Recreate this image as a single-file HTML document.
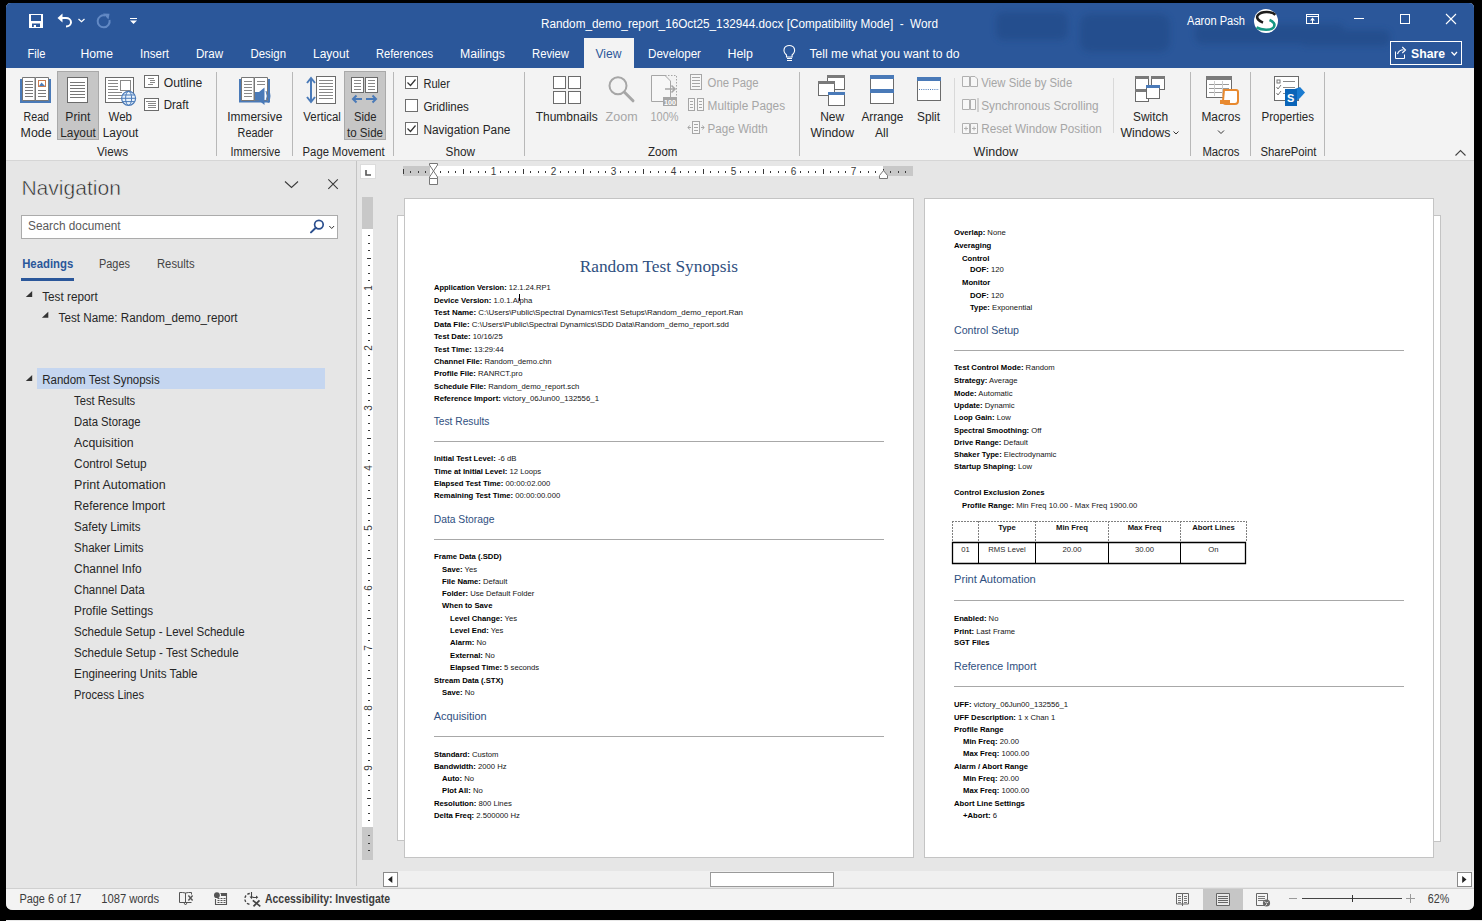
<!DOCTYPE html>
<html><head><meta charset="utf-8"><style>
html,body{margin:0;padding:0;background:#000;width:1482px;height:921px;overflow:hidden}
svg{display:block}
text{white-space:pre}
</style></head><body>
<svg width="1482" height="921" viewBox="0 0 1482 921">
<rect x="0" y="0" width="1482" height="921" fill="#000" />
<path d="M6,8 Q6,3 11,3 H1469 Q1474,3 1474,8 V903 Q1474,910 1467,910 H13 Q6,910 6,903 Z" fill="#e6e6e6"/>
<path d="M6,8 Q6,3 11,3 H1469 Q1474,3 1474,8 V68 H6 Z" fill="#2b579a"/>
<defs><filter id="bl" x="-20%" y="-50%" width="140%" height="200%"><feGaussianBlur stdDeviation="3"/></filter></defs>
<g fill="#1f4580" opacity="0.45" filter="url(#bl)"><rect x="996" y="12" width="72" height="28" rx="8"/><rect x="1080" y="14" width="90" height="38" rx="10"/><rect x="1195" y="24" width="150" height="20" rx="8"/><rect x="1300" y="30" width="90" height="16" rx="6"/></g>
<rect x="6" y="68" width="1468" height="92" fill="#f3f3f3" />
<rect x="6" y="160" width="1468" height="1" fill="#d6d6d6" />
<rect x="6" y="888" width="1468" height="1" fill="#d0d0d0" />
<path d="M6,889 H1474 V903 Q1474,910 1467,910 H13 Q6,910 6,903 Z" fill="#f3f3f3"/>
<rect x="6" y="920" width="1482" height="1" fill="#e8e8e8" />
<path d="M29,14 H43 V28 H29 Z M31,15 V21 H41 V15 Z M32,23.5 V27 H33.8 V25 H36 V27 H40 V23.5 Z" fill="#fff" fill-rule="evenodd"/>
<path d="M62,18 H66 A5,4.2 0 0 1 66,26.4" fill="none" stroke="#fff" stroke-width="2"/>
<path d="M57.5,18 L62.5,13.5 L62.5,22.5 Z" fill="#fff"/>
<path d="M78.5,19 L81.5,21.8 L84.5,19" fill="none" stroke="#fff" stroke-width="1.2"/>
<path d="M105,15.5 A6,6 0 1 0 109.5,20" fill="none" stroke="#6289c4" stroke-width="2"/>
<path d="M103,13.5 L109.5,13.8 L108.5,19.5 Z" fill="#6289c4"/>
<rect x="130" y="18" width="7" height="1" fill="#fff" />
<path d="M130,20.5 H137 L133.5,24 Z" fill="#fff"/>
<text x="541" y="27.5" font-size="12" fill="#ffffff" font-family="'Liberation Sans', sans-serif" textLength="397" lengthAdjust="spacingAndGlyphs" >Random_demo_report_16Oct25_132944.docx [Compatibility Mode]  -  Word</text>
<text x="1187" y="25" font-size="12" fill="#ffffff" font-family="'Liberation Sans', sans-serif" textLength="58" lengthAdjust="spacingAndGlyphs" >Aaron Pash</text>
<circle cx="1266" cy="21" r="12" fill="#fff"/>
<path d="M1275.3,14.8 C1272,11.5 1262,10.5 1258,15 C1255.5,18 1259,21 1263,22.6" fill="none" stroke="#1d1d1d" stroke-width="2.6"/>
<path d="M1269.5,20 C1273,21.5 1276,24 1273.5,27.5 C1271,30.5 1262,30.5 1256.5,27.5" fill="none" stroke="#169683" stroke-width="2.6"/>
<rect x="1306.5" y="14.5" width="12" height="9" fill="none" stroke="#fff" stroke-width="1"/>
<rect x="1306" y="16" width="13" height="1" fill="#fff" />
<path d="M1312.5,17.5 L1310,20.5 H1315 Z" fill="#fff"/>
<rect x="1312" y="20" width="1" height="3" fill="#fff" />
<rect x="1354" y="18" width="10" height="1" fill="#fff" />
<rect x="1400.5" y="14.5" width="9" height="9" fill="none" stroke="#fff" stroke-width="1"/>
<path d="M1446,14 L1456,24 M1456,14 L1446,24" stroke="#fff" stroke-width="1.1"/>
<rect x="1390.5" y="41.5" width="71" height="23" fill="none" stroke="#fff" stroke-width="1"/>
<path d="M1395.5,51.5 V58.5 H1404.5 V54.5" fill="none" stroke="#fff" stroke-width="1"/>
<path d="M1397.5,54 C1398.5,51 1400.5,49.8 1403.5,49.8" fill="none" stroke="#fff" stroke-width="1.1"/>
<path d="M1402.3,47 L1405.5,50 L1402.3,53" fill="none" stroke="#fff" stroke-width="1.1"/>
<text x="1411" y="58" font-size="12.5" fill="#ffffff" font-family="'Liberation Sans', sans-serif" font-weight="bold" textLength="34" lengthAdjust="spacingAndGlyphs" >Share</text>
<path d="M1451.5,52 L1454.3,55 L1457,52" fill="none" stroke="#fff" stroke-width="1.2"/>
<rect x="584" y="38" width="50" height="30" fill="#f3f3f3" />
<text x="27.5" y="57.5" font-size="12" fill="#ffffff" font-family="'Liberation Sans', sans-serif" textLength="18" lengthAdjust="spacingAndGlyphs" >File</text>
<text x="80.5" y="57.5" font-size="12" fill="#ffffff" font-family="'Liberation Sans', sans-serif" textLength="32.5" lengthAdjust="spacingAndGlyphs" >Home</text>
<text x="140" y="57.5" font-size="12" fill="#ffffff" font-family="'Liberation Sans', sans-serif" textLength="29" lengthAdjust="spacingAndGlyphs" >Insert</text>
<text x="196" y="57.5" font-size="12" fill="#ffffff" font-family="'Liberation Sans', sans-serif" textLength="27" lengthAdjust="spacingAndGlyphs" >Draw</text>
<text x="250.5" y="57.5" font-size="12" fill="#ffffff" font-family="'Liberation Sans', sans-serif" textLength="35.5" lengthAdjust="spacingAndGlyphs" >Design</text>
<text x="313" y="57.5" font-size="12" fill="#ffffff" font-family="'Liberation Sans', sans-serif" textLength="36" lengthAdjust="spacingAndGlyphs" >Layout</text>
<text x="376" y="57.5" font-size="12" fill="#ffffff" font-family="'Liberation Sans', sans-serif" textLength="57" lengthAdjust="spacingAndGlyphs" >References</text>
<text x="460" y="57.5" font-size="12" fill="#ffffff" font-family="'Liberation Sans', sans-serif" textLength="45" lengthAdjust="spacingAndGlyphs" >Mailings</text>
<text x="532" y="57.5" font-size="12" fill="#ffffff" font-family="'Liberation Sans', sans-serif" textLength="37" lengthAdjust="spacingAndGlyphs" >Review</text>
<text x="648" y="57.5" font-size="12" fill="#ffffff" font-family="'Liberation Sans', sans-serif" textLength="53" lengthAdjust="spacingAndGlyphs" >Developer</text>
<text x="727.5" y="57.5" font-size="12" fill="#ffffff" font-family="'Liberation Sans', sans-serif" textLength="25.5" lengthAdjust="spacingAndGlyphs" >Help</text>
<text x="595.5" y="57.5" font-size="12" fill="#2b579a" font-family="'Liberation Sans', sans-serif" textLength="26" lengthAdjust="spacingAndGlyphs" >View</text>
<path d="M786.5,55 C782,51 784,45.5 789.3,45.5 C794.6,45.5 796.6,51 792.1,55 V57 H786.5 Z" fill="none" stroke="#fff" stroke-width="1.1"/>
<rect x="787" y="58" width="5" height="1" fill="#fff" />
<rect x="787" y="60" width="5" height="1" fill="#fff" />
<text x="809.5" y="57.5" font-size="12" fill="#ffffff" font-family="'Liberation Sans', sans-serif" textLength="150" lengthAdjust="spacingAndGlyphs" >Tell me what you want to do</text>
<rect x="216" y="72" width="1" height="84" fill="#b8b8b8" />
<rect x="292" y="72" width="1" height="84" fill="#b8b8b8" />
<rect x="393" y="72" width="1" height="84" fill="#b8b8b8" />
<rect x="524" y="72" width="1" height="84" fill="#b8b8b8" />
<rect x="799" y="72" width="1" height="84" fill="#b8b8b8" />
<rect x="1190" y="72" width="1" height="84" fill="#b8b8b8" />
<rect x="1250" y="72" width="1" height="84" fill="#b8b8b8" />
<rect x="1324" y="72" width="1" height="84" fill="#b8b8b8" />
<rect x="954" y="78" width="1" height="55" fill="#d9d9d9" />
<rect x="1113" y="78" width="1" height="55" fill="#d9d9d9" />
<text x="97" y="155.5" font-size="12" fill="#262626" font-family="'Liberation Sans', sans-serif" textLength="31" lengthAdjust="spacingAndGlyphs" >Views</text>
<text x="230.5" y="155.5" font-size="12" fill="#262626" font-family="'Liberation Sans', sans-serif" textLength="49.7" lengthAdjust="spacingAndGlyphs" >Immersive</text>
<text x="302.6" y="155.5" font-size="12" fill="#262626" font-family="'Liberation Sans', sans-serif" textLength="82.1" lengthAdjust="spacingAndGlyphs" >Page Movement</text>
<text x="445.6" y="155.5" font-size="12" fill="#262626" font-family="'Liberation Sans', sans-serif" textLength="29.4" lengthAdjust="spacingAndGlyphs" >Show</text>
<text x="648" y="155.5" font-size="12" fill="#262626" font-family="'Liberation Sans', sans-serif" textLength="29.4" lengthAdjust="spacingAndGlyphs" >Zoom</text>
<text x="973.6" y="155.5" font-size="12" fill="#262626" font-family="'Liberation Sans', sans-serif" textLength="44.5" lengthAdjust="spacingAndGlyphs" >Window</text>
<text x="1202.4" y="155.5" font-size="12" fill="#262626" font-family="'Liberation Sans', sans-serif" textLength="37.1" lengthAdjust="spacingAndGlyphs" >Macros</text>
<text x="1260.5" y="155.5" font-size="12" fill="#262626" font-family="'Liberation Sans', sans-serif" textLength="56.0" lengthAdjust="spacingAndGlyphs" >SharePoint</text>
<rect x="57.5" y="71.5" width="41" height="68" fill="#c6c6c6" stroke="#a9a9a9" stroke-width="1"/>
<rect x="344.5" y="71.5" width="41" height="68" fill="#c6c6c6" stroke="#a9a9a9" stroke-width="1"/>
<rect x="20" y="79" width="31" height="24" fill="#4a7ab8" />
<path d="M22.5,77.5 H35 V100.5 H22.5 Z M35.5,77.5 H48.5 V100.5 H35.5 Z" fill="#fff" stroke="#777" stroke-width="1"/>
<rect x="25" y="81" width="8" height="1" fill="#7a7a7a" />
<rect x="25" y="84" width="8" height="1" fill="#7a7a7a" />
<rect x="25" y="87" width="8" height="1" fill="#7a7a7a" />
<rect x="25" y="90" width="8" height="1" fill="#7a7a7a" />
<rect x="25" y="93" width="8" height="1" fill="#7a7a7a" />
<rect x="25" y="96" width="8" height="1" fill="#7a7a7a" />
<rect x="38.5" y="80.5" width="7" height="6" fill="#fff" stroke="#c87b50" stroke-width="1"/>
<path d="M39,86 L41.5,82.5 L44,85 L45,86 Z" fill="#4a7ab8"/>
<rect x="38" y="90" width="8" height="1" fill="#7a7a7a" />
<rect x="38" y="93" width="8" height="1" fill="#7a7a7a" />
<rect x="38" y="96" width="8" height="1" fill="#7a7a7a" />
<text x="23.5" y="120.5" font-size="12" fill="#262626" font-family="'Liberation Sans', sans-serif" textLength="25.5" lengthAdjust="spacingAndGlyphs" >Read</text>
<text x="20.6" y="136.5" font-size="12" fill="#262626" font-family="'Liberation Sans', sans-serif" textLength="31" lengthAdjust="spacingAndGlyphs" >Mode</text>
<rect x="67.5" y="77.5" width="20" height="25" fill="#fff" stroke="#6b6b6b" stroke-width="1"/>
<rect x="70" y="82" width="15" height="1" fill="#777" />
<rect x="70" y="85" width="15" height="1" fill="#777" />
<rect x="70" y="88" width="15" height="1" fill="#777" />
<rect x="70" y="91" width="15" height="1" fill="#777" />
<rect x="70" y="94" width="15" height="1" fill="#777" />
<rect x="70" y="97" width="15" height="1" fill="#777" />
<text x="65.3" y="120.5" font-size="12" fill="#262626" font-family="'Liberation Sans', sans-serif" textLength="25" lengthAdjust="spacingAndGlyphs" >Print</text>
<text x="60.3" y="136.5" font-size="12" fill="#262626" font-family="'Liberation Sans', sans-serif" textLength="35.5" lengthAdjust="spacingAndGlyphs" >Layout</text>
<rect x="105.5" y="77.5" width="28" height="25" fill="#fff" stroke="#6b6b6b" stroke-width="1"/>
<rect x="108" y="80" width="10" height="1" fill="#888" />
<rect x="108" y="83" width="10" height="1" fill="#888" />
<rect x="108" y="86" width="10" height="1" fill="#888" />
<rect x="108" y="89" width="10" height="1" fill="#888" />
<rect x="108" y="92" width="14" height="1" fill="#888" />
<rect x="108" y="95" width="14" height="1" fill="#888" />
<rect x="108" y="98" width="14" height="1" fill="#888" />
<rect x="120.5" y="80.5" width="10" height="10" fill="#fff" stroke="#888" stroke-width="1"/>
<circle cx="128.6" cy="98.3" r="7" fill="#e8f2fb" stroke="#4a7ab8" stroke-width="1.2"/>
<ellipse cx="128.6" cy="98.3" rx="3" ry="7" fill="none" stroke="#4a7ab8" stroke-width="1"/>
<path d="M121.6,98.3 H135.6 M122.5,95 H134.7 M122.5,101.6 H134.7" stroke="#4a7ab8" stroke-width="1"/>
<text x="108.5" y="120.5" font-size="12" fill="#262626" font-family="'Liberation Sans', sans-serif" textLength="23.5" lengthAdjust="spacingAndGlyphs" >Web</text>
<text x="102.8" y="136.5" font-size="12" fill="#262626" font-family="'Liberation Sans', sans-serif" textLength="35.5" lengthAdjust="spacingAndGlyphs" >Layout</text>
<rect x="144.5" y="75.5" width="14" height="12" fill="#fff" stroke="#6b6b6b" stroke-width="1"/>
<rect x="148" y="78" width="6" height="1" fill="#888" />
<rect x="150" y="80" width="5" height="1" fill="#888" />
<rect x="150" y="82" width="5" height="1" fill="#888" />
<rect x="148" y="84" width="5" height="1" fill="#888" />
<text x="163.7" y="87" font-size="12" fill="#262626" font-family="'Liberation Sans', sans-serif" textLength="38.5" lengthAdjust="spacingAndGlyphs" >Outline</text>
<rect x="144.5" y="98.5" width="14" height="12" fill="#fff" stroke="#6b6b6b" stroke-width="1"/>
<rect x="146" y="101" width="10" height="1" fill="#888" />
<rect x="148" y="103" width="8" height="1" fill="#888" />
<rect x="148" y="105" width="8" height="1" fill="#888" />
<rect x="148" y="107" width="8" height="1" fill="#888" />
<text x="163.7" y="109" font-size="12" fill="#262626" font-family="'Liberation Sans', sans-serif" textLength="25" lengthAdjust="spacingAndGlyphs" >Draft</text>
<rect x="239" y="79" width="31" height="23.5" fill="#4a7ab8" />
<path d="M241.5,77.5 H254 V100.5 H241.5 Z M254.5,77.5 H267.5 V100.5 H254.5 Z" fill="#fff" stroke="#777" stroke-width="1"/>
<rect x="244" y="81" width="8" height="1" fill="#8a8a8a" />
<rect x="244" y="84" width="8" height="1" fill="#8a8a8a" />
<rect x="244" y="87" width="8" height="1" fill="#8a8a8a" />
<rect x="244" y="90" width="8" height="1" fill="#8a8a8a" />
<rect x="244" y="93" width="8" height="1" fill="#8a8a8a" />
<rect x="244" y="96" width="8" height="1" fill="#8a8a8a" />
<rect x="257" y="81" width="8" height="1" fill="#8a8a8a" />
<rect x="257" y="84" width="8" height="1" fill="#8a8a8a" />
<path d="M255,92 H259 L264.5,87.5 V105 L259,100.5 H255 Z" fill="#4a7ab8"/>
<path d="M266,91 Q268.5,96 266,101 M268,89 Q272,96 268,103" fill="none" stroke="#4a7ab8" stroke-width="1"/>
<text x="227.3" y="120.5" font-size="12" fill="#262626" font-family="'Liberation Sans', sans-serif" textLength="55" lengthAdjust="spacingAndGlyphs" >Immersive</text>
<text x="237.6" y="136.5" font-size="12" fill="#262626" font-family="'Liberation Sans', sans-serif" textLength="35.5" lengthAdjust="spacingAndGlyphs" >Reader</text>
<path d="M311,79 V101" stroke="#4a7ab8" stroke-width="2"/>
<path d="M307,83 L311,78 L315,83 M307,97 L311,102 L315,97" fill="none" stroke="#4a7ab8" stroke-width="2"/>
<rect x="316.5" y="76.5" width="19" height="27" fill="#fff" stroke="#6b6b6b" stroke-width="1"/>
<rect x="319" y="80" width="14" height="1" fill="#888" />
<rect x="319" y="83" width="14" height="1" fill="#888" />
<rect x="319" y="86" width="14" height="1" fill="#888" />
<rect x="319" y="89" width="14" height="1" fill="#888" />
<rect x="319" y="92" width="14" height="1" fill="#888" />
<rect x="319" y="95" width="14" height="1" fill="#888" />
<rect x="319" y="98" width="14" height="1" fill="#888" />
<text x="303.3" y="120.5" font-size="12" fill="#262626" font-family="'Liberation Sans', sans-serif" textLength="37.5" lengthAdjust="spacingAndGlyphs" >Vertical</text>
<rect x="351.5" y="77.5" width="12" height="15" fill="#fff" stroke="#6b6b6b" stroke-width="1"/>
<rect x="365.5" y="77.5" width="12" height="15" fill="#fff" stroke="#6b6b6b" stroke-width="1"/>
<rect x="354" y="80" width="7" height="1" fill="#888" />
<rect x="354" y="83" width="7" height="1" fill="#888" />
<rect x="354" y="86" width="7" height="1" fill="#888" />
<rect x="354" y="89" width="7" height="1" fill="#888" />
<rect x="368" y="80" width="7" height="1" fill="#888" />
<rect x="368" y="83" width="7" height="1" fill="#888" />
<rect x="368" y="86" width="7" height="1" fill="#888" />
<rect x="368" y="89" width="7" height="1" fill="#888" />
<path d="M353,99 H362 M366,99 H376" stroke="#4a7ab8" stroke-width="2"/>
<path d="M356.5,95.5 L353,99 L356.5,102.5 M372.5,95.5 L376,99 L372.5,102.5" fill="none" stroke="#4a7ab8" stroke-width="2"/>
<text x="354" y="120.5" font-size="12" fill="#262626" font-family="'Liberation Sans', sans-serif" textLength="22.5" lengthAdjust="spacingAndGlyphs" >Side</text>
<text x="347" y="136.5" font-size="12" fill="#262626" font-family="'Liberation Sans', sans-serif" textLength="36" lengthAdjust="spacingAndGlyphs" >to Side</text>
<rect x="405.5" y="76.5" width="12" height="12" fill="#fff" stroke="#6e6e6e" stroke-width="1"/>
<path d="M407.5,82.5 L410.5,85.5 L415.5,79.5" fill="none" stroke="#333" stroke-width="1.2"/>
<text x="423.4" y="88" font-size="12" fill="#262626" font-family="'Liberation Sans', sans-serif" textLength="26.5" lengthAdjust="spacingAndGlyphs" >Ruler</text>
<rect x="405.5" y="99.5" width="12" height="12" fill="#fff" stroke="#6e6e6e" stroke-width="1"/>
<text x="423.4" y="111" font-size="12" fill="#262626" font-family="'Liberation Sans', sans-serif" textLength="45.5" lengthAdjust="spacingAndGlyphs" >Gridlines</text>
<rect x="405.5" y="122.5" width="12" height="12" fill="#fff" stroke="#6e6e6e" stroke-width="1"/>
<path d="M407.5,128.5 L410.5,131.5 L415.5,125.5" fill="none" stroke="#333" stroke-width="1.2"/>
<text x="423.4" y="134" font-size="12" fill="#262626" font-family="'Liberation Sans', sans-serif" textLength="87" lengthAdjust="spacingAndGlyphs" >Navigation Pane</text>
<rect x="553.5" y="76.5" width="12" height="12" fill="#fff" stroke="#6b6b6b" stroke-width="1"/>
<rect x="568.5" y="76.5" width="12" height="12" fill="#fff" stroke="#6b6b6b" stroke-width="1"/>
<rect x="553.5" y="91.5" width="12" height="12" fill="#fff" stroke="#6b6b6b" stroke-width="1"/>
<rect x="568.5" y="91.5" width="12" height="12" fill="#fff" stroke="#6b6b6b" stroke-width="1"/>
<text x="535.7" y="120.8" font-size="12" fill="#262626" font-family="'Liberation Sans', sans-serif" textLength="62" lengthAdjust="spacingAndGlyphs" >Thumbnails</text>
<circle cx="618" cy="85.8" r="8.5" fill="none" stroke="#a6a6a6" stroke-width="2"/>
<path d="M624.5,92.3 L633,100.8" stroke="#a6a6a6" stroke-width="3" stroke-linecap="round"/>
<text x="605.6" y="120.8" font-size="12" fill="#a6a6a6" font-family="'Liberation Sans', sans-serif" textLength="32" lengthAdjust="spacingAndGlyphs" >Zoom</text>
<path d="M651.5,75.5 H665 L670.5,81 V101.5 H651.5 Z" fill="#f7f7f7" stroke="#a6a6a6" stroke-width="1"/>
<path d="M665,75.5 H676.5 V96" fill="none" stroke="#a6a6a6" stroke-width="1" stroke-dasharray="1.5,1.5"/>
<path d="M665,89 H675 M671.5,85.5 L675,89 L671.5,92.5" fill="none" stroke="#a6a6a6" stroke-width="1.6"/>
<rect x="663" y="97" width="14" height="9" fill="#a6a6a6" />
<text x="664" y="104.5" font-size="7" fill="#fff" font-family="'Liberation Sans', sans-serif" font-weight="bold" textLength="12" lengthAdjust="spacingAndGlyphs" >100</text>
<text x="650.5" y="120.8" font-size="12" fill="#a6a6a6" font-family="'Liberation Sans', sans-serif" textLength="28" lengthAdjust="spacingAndGlyphs" >100%</text>
<rect x="690.5" y="74.5" width="11" height="15" fill="#f7f7f7" stroke="#a6a6a6" stroke-width="1"/>
<rect x="692" y="77" width="8" height="1" fill="#a6a6a6" />
<rect x="692" y="80" width="8" height="1" fill="#a6a6a6" />
<rect x="692" y="83" width="8" height="1" fill="#a6a6a6" />
<rect x="692" y="86" width="8" height="1" fill="#a6a6a6" />
<text x="707.6" y="86.5" font-size="12" fill="#a6a6a6" font-family="'Liberation Sans', sans-serif" textLength="51" lengthAdjust="spacingAndGlyphs" >One Page</text>
<rect x="688.5" y="98.5" width="6" height="12" fill="#f7f7f7" stroke="#a6a6a6" stroke-width="1"/>
<rect x="697.5" y="98.5" width="6" height="12" fill="#f7f7f7" stroke="#a6a6a6" stroke-width="1"/>
<rect x="690" y="101" width="3" height="1" fill="#a6a6a6" />
<rect x="690" y="104" width="3" height="1" fill="#a6a6a6" />
<rect x="690" y="107" width="3" height="1" fill="#a6a6a6" />
<rect x="699" y="101" width="3" height="1" fill="#a6a6a6" />
<rect x="699" y="104" width="3" height="1" fill="#a6a6a6" />
<rect x="699" y="107" width="3" height="1" fill="#a6a6a6" />
<text x="707.6" y="109.5" font-size="12" fill="#a6a6a6" font-family="'Liberation Sans', sans-serif" textLength="77.5" lengthAdjust="spacingAndGlyphs" >Multiple Pages</text>
<rect x="692.5" y="121.5" width="7" height="12" fill="#f7f7f7" stroke="#a6a6a6" stroke-width="1"/>
<rect x="694" y="124" width="4" height="1" fill="#a6a6a6" />
<rect x="694" y="127" width="4" height="1" fill="#a6a6a6" />
<rect x="694" y="130" width="4" height="1" fill="#a6a6a6" />
<path d="M691,127.5 L688,127.5 M689.5,125.5 L688,127.5 L689.5,129.5 M701,127.5 H704 M702.5,125.5 L704,127.5 L702.5,129.5" fill="none" stroke="#a6a6a6" stroke-width="1"/>
<text x="707.6" y="132.5" font-size="12" fill="#a6a6a6" font-family="'Liberation Sans', sans-serif" textLength="60" lengthAdjust="spacingAndGlyphs" >Page Width</text>
<rect x="827.5" y="75.5" width="17" height="14" fill="#fff" stroke="#6b6b6b" stroke-width="1"/>
<rect x="827" y="75" width="18" height="3" fill="#7a7a7a" />
<rect x="818.5" y="81.5" width="16" height="14" fill="#fff" stroke="#6b6b6b" stroke-width="1"/>
<rect x="818" y="81" width="17" height="3" fill="#7a7a7a" />
<rect x="828.5" y="92.5" width="16" height="13" fill="#fff" stroke="#6b6b6b" stroke-width="1"/>
<rect x="828" y="92" width="17" height="3" fill="#4a7ab8" />
<text x="820.2" y="120.7" font-size="12" fill="#262626" font-family="'Liberation Sans', sans-serif" textLength="24" lengthAdjust="spacingAndGlyphs" >New</text>
<text x="810.5" y="136.5" font-size="12" fill="#262626" font-family="'Liberation Sans', sans-serif" textLength="43.5" lengthAdjust="spacingAndGlyphs" >Window</text>
<rect x="870.5" y="75.5" width="23" height="28" fill="#fff" stroke="#6b6b6b" stroke-width="1"/>
<rect x="870" y="75" width="24" height="4" fill="#4a7ab8" />
<rect x="870" y="89" width="24" height="4" fill="#4a7ab8" />
<text x="861.4" y="120.7" font-size="12" fill="#262626" font-family="'Liberation Sans', sans-serif" textLength="42" lengthAdjust="spacingAndGlyphs" >Arrange</text>
<text x="874.9" y="136.5" font-size="12" fill="#262626" font-family="'Liberation Sans', sans-serif" textLength="13.5" lengthAdjust="spacingAndGlyphs" >All</text>
<rect x="917.5" y="77.5" width="23" height="23" fill="#fff" stroke="#6b6b6b" stroke-width="1"/>
<rect x="917" y="77" width="24" height="4" fill="#4a7ab8" />
<path d="M919,89.5 H939" stroke="#4a7ab8" stroke-width="1" stroke-dasharray="1,1.2"/>
<text x="917" y="120.7" font-size="12" fill="#262626" font-family="'Liberation Sans', sans-serif" textLength="23" lengthAdjust="spacingAndGlyphs" >Split</text>
<path d="M962.5,76.5 H969.5 V86.5 H962.5 Z M970.5,76.5 H975 L977.5,79 V86.5 H970.5 Z" fill="#f7f7f7" stroke="#b0b0b0" stroke-width="1"/>
<text x="981.2" y="86.6" font-size="12" fill="#a6a6a6" font-family="'Liberation Sans', sans-serif" textLength="91" lengthAdjust="spacingAndGlyphs" >View Side by Side</text>
<path d="M962.5,99.5 H969.5 V109.5 H962.5 Z M970.5,99.5 H975.5 V109.5 H970.5 Z M978,98 V112" fill="#f7f7f7" stroke="#b0b0b0" stroke-width="1"/>
<text x="981.2" y="109.5" font-size="12" fill="#a6a6a6" font-family="'Liberation Sans', sans-serif" textLength="117.5" lengthAdjust="spacingAndGlyphs" >Synchronous Scrolling</text>
<path d="M962.5,123.5 H969.5 V133.5 H962.5 Z M970.5,123.5 H977.5 V133.5 H970.5 Z M964,128.5 H968 M966,126.5 V130.5 M972,128.5 H976 M974,126.5 V130.5" fill="#f7f7f7" stroke="#b0b0b0" stroke-width="1"/>
<text x="981.2" y="132.6" font-size="12" fill="#a6a6a6" font-family="'Liberation Sans', sans-serif" textLength="120.5" lengthAdjust="spacingAndGlyphs" >Reset Window Position</text>
<rect x="1135.5" y="76.5" width="13" height="13" fill="#fff" stroke="#6b6b6b" stroke-width="1"/>
<rect x="1135" y="76" width="14" height="3" fill="#7a7a7a" />
<rect x="1151.5" y="76.5" width="13" height="13" fill="#fff" stroke="#6b6b6b" stroke-width="1"/>
<rect x="1151" y="76" width="14" height="3" fill="#7a7a7a" />
<rect x="1135.5" y="89.5" width="13" height="12" fill="#fff" stroke="#6b6b6b" stroke-width="1"/>
<rect x="1135" y="89" width="14" height="3" fill="#7a7a7a" />
<rect x="1146.5" y="85.5" width="13" height="13" fill="#fff" stroke="#6b6b6b" stroke-width="1"/>
<rect x="1146" y="85" width="14" height="3" fill="#4a7ab8" />
<text x="1133" y="120.5" font-size="12" fill="#262626" font-family="'Liberation Sans', sans-serif" textLength="35" lengthAdjust="spacingAndGlyphs" >Switch</text>
<text x="1120.4" y="136.5" font-size="12" fill="#262626" font-family="'Liberation Sans', sans-serif" textLength="50" lengthAdjust="spacingAndGlyphs" >Windows</text>
<path d="M1173.5,131.5 L1176,134 L1178.5,131.5" fill="none" stroke="#333" stroke-width="1"/>
<rect x="1206.5" y="76.5" width="25" height="21" fill="#fff" stroke="#6b6b6b" stroke-width="1"/>
<rect x="1206" y="76" width="26" height="4" fill="#7a7a7a" />
<rect x="1209" y="84" width="20" height="1" fill="#999" />
<rect x="1209" y="88" width="20" height="1" fill="#999" />
<rect x="1209" y="92" width="20" height="1" fill="#999" />
<rect x="1214" y="81" width="1" height="15" fill="#ccc" />
<rect x="1222" y="81" width="1" height="15" fill="#ccc" />
<path d="M1224,90 H1236 Q1238,90 1238,92 V101 Q1238,104 1235,104 H1226 Q1223,104 1223,101 Z" fill="#fff" stroke="#e8892f" stroke-width="2"/>
<rect x="1220" y="100" width="10" height="4" fill="#e8892f" />
<text x="1201.4" y="120.7" font-size="12" fill="#262626" font-family="'Liberation Sans', sans-serif" textLength="39" lengthAdjust="spacingAndGlyphs" >Macros</text>
<path d="M1218,130.5 L1221,133.5 L1224,130.5" fill="none" stroke="#333" stroke-width="1"/>
<rect x="1274.5" y="76.5" width="24" height="24" fill="#fff" stroke="#6b6b6b" stroke-width="1"/>
<rect x="1277" y="80" width="3" height="3" fill="#fff" stroke="#777" stroke-width="1"/>
<rect x="1283" y="81" width="12" height="1" fill="#888" />
<rect x="1283" y="87" width="12" height="1" fill="#888" />
<rect x="1283" y="93" width="7" height="1" fill="#888" />
<path d="M1276.5,87 L1278,89 L1281,85 M1276.5,93 L1278,95 L1281,91" fill="none" stroke="#777" stroke-width="1"/>
<path d="M1292,90 L1300,87 L1305,92.5 L1300,98 L1292,105 Z" fill="#1a7bd0"/>
<path d="M1285,89 H1297 V106 H1285 Z" fill="#0a64b8"/>
<text x="1287" y="102" font-size="11" fill="#fff" font-family="'Liberation Sans', sans-serif" font-weight="bold" >S</text>
<text x="1261.5" y="120.7" font-size="12" fill="#262626" font-family="'Liberation Sans', sans-serif" textLength="52.5" lengthAdjust="spacingAndGlyphs" >Properties</text>
<path d="M1455.5,155.5 L1460.5,150.5 L1465.5,155.5" fill="none" stroke="#444" stroke-width="1.1"/>
<rect x="356" y="161" width="1" height="725" fill="#c4c4c4" />
<text x="21.4" y="195.2" font-size="21" fill="#222" font-family="'Liberation Sans', sans-serif" textLength="99.5" lengthAdjust="spacingAndGlyphs" stroke="#e6e6e6" stroke-width="0.55">Navigation</text>
<path d="M285,181.5 L291.5,187.5 L298,181.5" fill="none" stroke="#3a3a3a" stroke-width="1.1"/>
<path d="M328.3,179.3 L337.8,188.8 M337.8,179.3 L328.3,188.8" stroke="#3a3a3a" stroke-width="1.1"/>
<rect x="21.5" y="215.5" width="316" height="23" fill="#fff" stroke="#ababab" stroke-width="1"/>
<text x="28.1" y="230.4" font-size="12" fill="#5a5a5a" font-family="'Liberation Sans', sans-serif" textLength="92.5" lengthAdjust="spacingAndGlyphs" >Search document</text>
<circle cx="318.9" cy="224.6" r="4.3" fill="none" stroke="#2b4f8e" stroke-width="1.7"/>
<path d="M315.8,227.8 L311,232.4" stroke="#2b4f8e" stroke-width="2" stroke-linecap="round"/>
<path d="M329.3,226 L331.7,228.5 L334.1,226" fill="none" stroke="#333" stroke-width="1"/>
<text x="22.2" y="268.2" font-size="12" fill="#2b579a" font-family="'Liberation Sans', sans-serif" font-weight="bold" textLength="51" lengthAdjust="spacingAndGlyphs" >Headings</text>
<rect x="21" y="278" width="53" height="3" fill="#2b579a" />
<text x="99" y="268.2" font-size="12" fill="#444" font-family="'Liberation Sans', sans-serif" textLength="31" lengthAdjust="spacingAndGlyphs" >Pages</text>
<text x="157" y="268.2" font-size="12" fill="#444" font-family="'Liberation Sans', sans-serif" textLength="37.5" lengthAdjust="spacingAndGlyphs" >Results</text>
<path d="M25.8,297 L32.2,291 V297 Z" fill="#333"/>
<text x="42.2" y="300.7" font-size="12" fill="#262626" font-family="'Liberation Sans', sans-serif" textLength="55.5" lengthAdjust="spacingAndGlyphs" >Test report</text>
<path d="M41.9,317.7 L48.3,311.7 V317.7 Z" fill="#333"/>
<text x="58.6" y="321.6" font-size="12" fill="#262626" font-family="'Liberation Sans', sans-serif" textLength="179" lengthAdjust="spacingAndGlyphs" >Test Name: Random_demo_report</text>
<rect x="37" y="368" width="288" height="21" fill="#c5d6f0" />
<path d="M25.8,381 L32.2,375 V381 Z" fill="#333"/>
<text x="42.2" y="384.1" font-size="12" fill="#262626" font-family="'Liberation Sans', sans-serif" textLength="117.5" lengthAdjust="spacingAndGlyphs" >Random Test Synopsis</text>
<text x="74.1" y="405" font-size="12" fill="#262626" font-family="'Liberation Sans', sans-serif" textLength="61" lengthAdjust="spacingAndGlyphs" >Test Results</text>
<text x="74.1" y="426" font-size="12" fill="#262626" font-family="'Liberation Sans', sans-serif" textLength="66.5" lengthAdjust="spacingAndGlyphs" >Data Storage</text>
<text x="74.1" y="447" font-size="12" fill="#262626" font-family="'Liberation Sans', sans-serif" textLength="59.5" lengthAdjust="spacingAndGlyphs" >Acquisition</text>
<text x="74.1" y="468" font-size="12" fill="#262626" font-family="'Liberation Sans', sans-serif" textLength="72.5" lengthAdjust="spacingAndGlyphs" >Control Setup</text>
<text x="74.1" y="489" font-size="12" fill="#262626" font-family="'Liberation Sans', sans-serif" textLength="91.5" lengthAdjust="spacingAndGlyphs" >Print Automation</text>
<text x="74.1" y="510" font-size="12" fill="#262626" font-family="'Liberation Sans', sans-serif" textLength="91" lengthAdjust="spacingAndGlyphs" >Reference Import</text>
<text x="74.1" y="531" font-size="12" fill="#262626" font-family="'Liberation Sans', sans-serif" textLength="66.5" lengthAdjust="spacingAndGlyphs" >Safety Limits</text>
<text x="74.1" y="552" font-size="12" fill="#262626" font-family="'Liberation Sans', sans-serif" textLength="69.5" lengthAdjust="spacingAndGlyphs" >Shaker Limits</text>
<text x="74.1" y="573" font-size="12" fill="#262626" font-family="'Liberation Sans', sans-serif" textLength="67.5" lengthAdjust="spacingAndGlyphs" >Channel Info</text>
<text x="74.1" y="594" font-size="12" fill="#262626" font-family="'Liberation Sans', sans-serif" textLength="70.5" lengthAdjust="spacingAndGlyphs" >Channel Data</text>
<text x="74.1" y="615" font-size="12" fill="#262626" font-family="'Liberation Sans', sans-serif" textLength="79" lengthAdjust="spacingAndGlyphs" >Profile Settings</text>
<text x="74.1" y="636" font-size="12" fill="#262626" font-family="'Liberation Sans', sans-serif" textLength="170.5" lengthAdjust="spacingAndGlyphs" >Schedule Setup - Level Schedule</text>
<text x="74.1" y="657" font-size="12" fill="#262626" font-family="'Liberation Sans', sans-serif" textLength="164.5" lengthAdjust="spacingAndGlyphs" >Schedule Setup - Test Schedule</text>
<text x="74.1" y="678" font-size="12" fill="#262626" font-family="'Liberation Sans', sans-serif" textLength="123.5" lengthAdjust="spacingAndGlyphs" >Engineering Units Table</text>
<text x="74.1" y="699" font-size="12" fill="#262626" font-family="'Liberation Sans', sans-serif" textLength="70" lengthAdjust="spacingAndGlyphs" >Process Lines</text>
<rect x="360" y="164" width="16" height="15" fill="#dcdcdc" />
<rect x="361" y="165" width="14" height="13" fill="#fff" />
<path d="M366,170 V175 H371" fill="none" stroke="#555" stroke-width="1.6"/>
<rect x="403" y="166" width="510" height="10" fill="#c8c8c8" />
<rect x="430" y="166" width="453" height="10" fill="#fff" />
<rect x="403" y="169" width="1" height="5" fill="#3a3a3a" />
<rect x="410" y="171" width="1" height="2" fill="#3a3a3a" />
<rect x="418" y="171" width="1" height="2" fill="#3a3a3a" />
<rect x="425" y="171" width="1" height="2" fill="#3a3a3a" />
<rect x="440" y="171" width="1" height="2" fill="#3a3a3a" />
<rect x="448" y="171" width="1" height="2" fill="#3a3a3a" />
<rect x="455" y="171" width="1" height="2" fill="#3a3a3a" />
<rect x="463" y="169" width="1" height="5" fill="#3a3a3a" />
<rect x="470" y="171" width="1" height="2" fill="#3a3a3a" />
<rect x="478" y="171" width="1" height="2" fill="#3a3a3a" />
<rect x="485" y="171" width="1" height="2" fill="#3a3a3a" />
<text x="493.5" y="175" font-size="10" fill="#3a3a3a" font-family="'Liberation Sans', sans-serif" text-anchor="middle" >1</text>
<rect x="500" y="171" width="1" height="2" fill="#3a3a3a" />
<rect x="508" y="171" width="1" height="2" fill="#3a3a3a" />
<rect x="515" y="171" width="1" height="2" fill="#3a3a3a" />
<rect x="523" y="169" width="1" height="5" fill="#3a3a3a" />
<rect x="530" y="171" width="1" height="2" fill="#3a3a3a" />
<rect x="538" y="171" width="1" height="2" fill="#3a3a3a" />
<rect x="545" y="171" width="1" height="2" fill="#3a3a3a" />
<text x="553.5" y="175" font-size="10" fill="#3a3a3a" font-family="'Liberation Sans', sans-serif" text-anchor="middle" >2</text>
<rect x="560" y="171" width="1" height="2" fill="#3a3a3a" />
<rect x="568" y="171" width="1" height="2" fill="#3a3a3a" />
<rect x="575" y="171" width="1" height="2" fill="#3a3a3a" />
<rect x="583" y="169" width="1" height="5" fill="#3a3a3a" />
<rect x="590" y="171" width="1" height="2" fill="#3a3a3a" />
<rect x="598" y="171" width="1" height="2" fill="#3a3a3a" />
<rect x="605" y="171" width="1" height="2" fill="#3a3a3a" />
<text x="613.5" y="175" font-size="10" fill="#3a3a3a" font-family="'Liberation Sans', sans-serif" text-anchor="middle" >3</text>
<rect x="620" y="171" width="1" height="2" fill="#3a3a3a" />
<rect x="628" y="171" width="1" height="2" fill="#3a3a3a" />
<rect x="635" y="171" width="1" height="2" fill="#3a3a3a" />
<rect x="643" y="169" width="1" height="5" fill="#3a3a3a" />
<rect x="650" y="171" width="1" height="2" fill="#3a3a3a" />
<rect x="658" y="171" width="1" height="2" fill="#3a3a3a" />
<rect x="665" y="171" width="1" height="2" fill="#3a3a3a" />
<text x="673.5" y="175" font-size="10" fill="#3a3a3a" font-family="'Liberation Sans', sans-serif" text-anchor="middle" >4</text>
<rect x="680" y="171" width="1" height="2" fill="#3a3a3a" />
<rect x="688" y="171" width="1" height="2" fill="#3a3a3a" />
<rect x="695" y="171" width="1" height="2" fill="#3a3a3a" />
<rect x="703" y="169" width="1" height="5" fill="#3a3a3a" />
<rect x="710" y="171" width="1" height="2" fill="#3a3a3a" />
<rect x="718" y="171" width="1" height="2" fill="#3a3a3a" />
<rect x="725" y="171" width="1" height="2" fill="#3a3a3a" />
<text x="733.5" y="175" font-size="10" fill="#3a3a3a" font-family="'Liberation Sans', sans-serif" text-anchor="middle" >5</text>
<rect x="740" y="171" width="1" height="2" fill="#3a3a3a" />
<rect x="748" y="171" width="1" height="2" fill="#3a3a3a" />
<rect x="755" y="171" width="1" height="2" fill="#3a3a3a" />
<rect x="763" y="169" width="1" height="5" fill="#3a3a3a" />
<rect x="770" y="171" width="1" height="2" fill="#3a3a3a" />
<rect x="778" y="171" width="1" height="2" fill="#3a3a3a" />
<rect x="785" y="171" width="1" height="2" fill="#3a3a3a" />
<text x="793.5" y="175" font-size="10" fill="#3a3a3a" font-family="'Liberation Sans', sans-serif" text-anchor="middle" >6</text>
<rect x="800" y="171" width="1" height="2" fill="#3a3a3a" />
<rect x="808" y="171" width="1" height="2" fill="#3a3a3a" />
<rect x="815" y="171" width="1" height="2" fill="#3a3a3a" />
<rect x="823" y="169" width="1" height="5" fill="#3a3a3a" />
<rect x="830" y="171" width="1" height="2" fill="#3a3a3a" />
<rect x="838" y="171" width="1" height="2" fill="#3a3a3a" />
<rect x="845" y="171" width="1" height="2" fill="#3a3a3a" />
<text x="853.5" y="175" font-size="10" fill="#3a3a3a" font-family="'Liberation Sans', sans-serif" text-anchor="middle" >7</text>
<rect x="860" y="171" width="1" height="2" fill="#3a3a3a" />
<rect x="868" y="171" width="1" height="2" fill="#3a3a3a" />
<rect x="875" y="171" width="1" height="2" fill="#3a3a3a" />
<rect x="883" y="169" width="1" height="5" fill="#3a3a3a" />
<rect x="890" y="171" width="1" height="2" fill="#3a3a3a" />
<rect x="898" y="171" width="1" height="2" fill="#3a3a3a" />
<rect x="905" y="171" width="1" height="2" fill="#3a3a3a" />
<path d="M429.5,163.5 H437.5 V165 L433.5,171 L429.5,165 Z" fill="#fff" stroke="#777" stroke-width="1"/>
<path d="M433.5,171 L437.5,177 V178.5 H429.5 V177 Z" fill="#fff" stroke="#777" stroke-width="1"/>
<path d="M429.5,178.5 H437.5 V184.5 H429.5 Z" fill="#fff" stroke="#777" stroke-width="1"/>
<path d="M883.5,170.5 L887.5,175.5 V178.5 H879.5 V175.5 Z" fill="#fff" stroke="#777" stroke-width="1"/>
<rect x="362" y="197" width="11" height="663" fill="#c8c8c8" />
<rect x="362" y="229" width="11" height="598" fill="#fff" />
<rect x="368" y="235" width="2" height="1" fill="#3a3a3a" />
<rect x="368" y="243" width="2" height="1" fill="#3a3a3a" />
<rect x="368" y="250" width="2" height="1" fill="#3a3a3a" />
<rect x="367" y="258" width="4" height="1" fill="#3a3a3a" />
<rect x="368" y="265" width="2" height="1" fill="#3a3a3a" />
<rect x="368" y="273" width="2" height="1" fill="#3a3a3a" />
<rect x="368" y="280" width="2" height="1" fill="#3a3a3a" />
<text x="0" y="0" font-size="10" fill="#3a3a3a" font-family="'Liberation Sans', sans-serif" text-anchor="middle" transform="translate(372.2,288.0) rotate(-90)">1</text>
<rect x="368" y="295" width="2" height="1" fill="#3a3a3a" />
<rect x="368" y="303" width="2" height="1" fill="#3a3a3a" />
<rect x="368" y="310" width="2" height="1" fill="#3a3a3a" />
<rect x="367" y="318" width="4" height="1" fill="#3a3a3a" />
<rect x="368" y="325" width="2" height="1" fill="#3a3a3a" />
<rect x="368" y="333" width="2" height="1" fill="#3a3a3a" />
<rect x="368" y="340" width="2" height="1" fill="#3a3a3a" />
<text x="0" y="0" font-size="10" fill="#3a3a3a" font-family="'Liberation Sans', sans-serif" text-anchor="middle" transform="translate(372.2,348.0) rotate(-90)">2</text>
<rect x="368" y="355" width="2" height="1" fill="#3a3a3a" />
<rect x="368" y="363" width="2" height="1" fill="#3a3a3a" />
<rect x="368" y="370" width="2" height="1" fill="#3a3a3a" />
<rect x="367" y="378" width="4" height="1" fill="#3a3a3a" />
<rect x="368" y="385" width="2" height="1" fill="#3a3a3a" />
<rect x="368" y="393" width="2" height="1" fill="#3a3a3a" />
<rect x="368" y="400" width="2" height="1" fill="#3a3a3a" />
<text x="0" y="0" font-size="10" fill="#3a3a3a" font-family="'Liberation Sans', sans-serif" text-anchor="middle" transform="translate(372.2,408.0) rotate(-90)">3</text>
<rect x="368" y="415" width="2" height="1" fill="#3a3a3a" />
<rect x="368" y="423" width="2" height="1" fill="#3a3a3a" />
<rect x="368" y="430" width="2" height="1" fill="#3a3a3a" />
<rect x="367" y="438" width="4" height="1" fill="#3a3a3a" />
<rect x="368" y="445" width="2" height="1" fill="#3a3a3a" />
<rect x="368" y="453" width="2" height="1" fill="#3a3a3a" />
<rect x="368" y="460" width="2" height="1" fill="#3a3a3a" />
<text x="0" y="0" font-size="10" fill="#3a3a3a" font-family="'Liberation Sans', sans-serif" text-anchor="middle" transform="translate(372.2,468.0) rotate(-90)">4</text>
<rect x="368" y="475" width="2" height="1" fill="#3a3a3a" />
<rect x="368" y="483" width="2" height="1" fill="#3a3a3a" />
<rect x="368" y="490" width="2" height="1" fill="#3a3a3a" />
<rect x="367" y="498" width="4" height="1" fill="#3a3a3a" />
<rect x="368" y="505" width="2" height="1" fill="#3a3a3a" />
<rect x="368" y="513" width="2" height="1" fill="#3a3a3a" />
<rect x="368" y="520" width="2" height="1" fill="#3a3a3a" />
<text x="0" y="0" font-size="10" fill="#3a3a3a" font-family="'Liberation Sans', sans-serif" text-anchor="middle" transform="translate(372.2,528.0) rotate(-90)">5</text>
<rect x="368" y="535" width="2" height="1" fill="#3a3a3a" />
<rect x="368" y="543" width="2" height="1" fill="#3a3a3a" />
<rect x="368" y="550" width="2" height="1" fill="#3a3a3a" />
<rect x="367" y="558" width="4" height="1" fill="#3a3a3a" />
<rect x="368" y="565" width="2" height="1" fill="#3a3a3a" />
<rect x="368" y="573" width="2" height="1" fill="#3a3a3a" />
<rect x="368" y="580" width="2" height="1" fill="#3a3a3a" />
<text x="0" y="0" font-size="10" fill="#3a3a3a" font-family="'Liberation Sans', sans-serif" text-anchor="middle" transform="translate(372.2,588.0) rotate(-90)">6</text>
<rect x="368" y="595" width="2" height="1" fill="#3a3a3a" />
<rect x="368" y="603" width="2" height="1" fill="#3a3a3a" />
<rect x="368" y="610" width="2" height="1" fill="#3a3a3a" />
<rect x="367" y="618" width="4" height="1" fill="#3a3a3a" />
<rect x="368" y="625" width="2" height="1" fill="#3a3a3a" />
<rect x="368" y="633" width="2" height="1" fill="#3a3a3a" />
<rect x="368" y="640" width="2" height="1" fill="#3a3a3a" />
<text x="0" y="0" font-size="10" fill="#3a3a3a" font-family="'Liberation Sans', sans-serif" text-anchor="middle" transform="translate(372.2,648.0) rotate(-90)">7</text>
<rect x="368" y="655" width="2" height="1" fill="#3a3a3a" />
<rect x="368" y="663" width="2" height="1" fill="#3a3a3a" />
<rect x="368" y="670" width="2" height="1" fill="#3a3a3a" />
<rect x="367" y="678" width="4" height="1" fill="#3a3a3a" />
<rect x="368" y="685" width="2" height="1" fill="#3a3a3a" />
<rect x="368" y="693" width="2" height="1" fill="#3a3a3a" />
<rect x="368" y="700" width="2" height="1" fill="#3a3a3a" />
<text x="0" y="0" font-size="10" fill="#3a3a3a" font-family="'Liberation Sans', sans-serif" text-anchor="middle" transform="translate(372.2,708.0) rotate(-90)">8</text>
<rect x="368" y="715" width="2" height="1" fill="#3a3a3a" />
<rect x="368" y="723" width="2" height="1" fill="#3a3a3a" />
<rect x="368" y="730" width="2" height="1" fill="#3a3a3a" />
<rect x="367" y="738" width="4" height="1" fill="#3a3a3a" />
<rect x="368" y="745" width="2" height="1" fill="#3a3a3a" />
<rect x="368" y="753" width="2" height="1" fill="#3a3a3a" />
<rect x="368" y="760" width="2" height="1" fill="#3a3a3a" />
<text x="0" y="0" font-size="10" fill="#3a3a3a" font-family="'Liberation Sans', sans-serif" text-anchor="middle" transform="translate(372.2,768.0) rotate(-90)">9</text>
<rect x="368" y="775" width="2" height="1" fill="#3a3a3a" />
<rect x="368" y="783" width="2" height="1" fill="#3a3a3a" />
<rect x="368" y="790" width="2" height="1" fill="#3a3a3a" />
<rect x="367" y="798" width="4" height="1" fill="#3a3a3a" />
<rect x="368" y="805" width="2" height="1" fill="#3a3a3a" />
<rect x="368" y="813" width="2" height="1" fill="#3a3a3a" />
<rect x="368" y="820" width="2" height="1" fill="#3a3a3a" />
<rect x="368" y="835" width="2" height="1" fill="#3a3a3a" />
<rect x="368" y="843" width="2" height="1" fill="#3a3a3a" />
<rect x="368" y="850" width="2" height="1" fill="#3a3a3a" />
<rect x="397.5" y="215.5" width="9" height="625" fill="#fff" stroke="#c4c4c4" stroke-width="1"/>
<rect x="1430.5" y="215.5" width="10" height="626" fill="#fff" stroke="#c4c4c4" stroke-width="1"/>
<rect x="404.5" y="198.5" width="509" height="659" fill="#fff" stroke="#c4c4c4" stroke-width="1"/>
<rect x="924.5" y="198.5" width="509" height="659" fill="#fff" stroke="#c4c4c4" stroke-width="1"/>
<text x="579.7" y="272.1" font-size="17.3" fill="#30507f" font-family="'Liberation Serif', serif" textLength="158.4" lengthAdjust="spacingAndGlyphs" >Random Test Synopsis</text>
<text x="434" y="289.8" font-size="7.7" fill="#111" font-family="'Liberation Sans', sans-serif" textLength="116.6" lengthAdjust="spacingAndGlyphs" ><tspan font-weight="bold" fill="#000">Application Version:</tspan><tspan fill="#141414"> 12.1.24.RP1</tspan></text>
<text x="434" y="302.7" font-size="7.7" fill="#111" font-family="'Liberation Sans', sans-serif" ><tspan font-weight="bold" fill="#000">Device Version:</tspan><tspan fill="#141414"> 1.0.1.Alpha</tspan></text>
<text x="434" y="314.8" font-size="7.7" fill="#111" font-family="'Liberation Sans', sans-serif" textLength="309" lengthAdjust="spacingAndGlyphs" ><tspan font-weight="bold" fill="#000">Test Name:</tspan><tspan fill="#141414"> C:\Users\Public\Spectral Dynamics\Test Setups\Random_demo_report.Ran</tspan></text>
<text x="434" y="326.7" font-size="7.7" fill="#111" font-family="'Liberation Sans', sans-serif" textLength="295" lengthAdjust="spacingAndGlyphs" ><tspan font-weight="bold" fill="#000">Data File:</tspan><tspan fill="#141414"> C:\Users\Public\Spectral Dynamics\SDD Data\Random_demo_report.sdd</tspan></text>
<text x="434" y="338.9" font-size="7.7" fill="#111" font-family="'Liberation Sans', sans-serif" ><tspan font-weight="bold" fill="#000">Test Date:</tspan><tspan fill="#141414"> 10/16/25</tspan></text>
<text x="434" y="351.7" font-size="7.7" fill="#111" font-family="'Liberation Sans', sans-serif" ><tspan font-weight="bold" fill="#000">Test Time:</tspan><tspan fill="#141414"> 13:29:44</tspan></text>
<text x="434" y="363.9" font-size="7.7" fill="#111" font-family="'Liberation Sans', sans-serif" ><tspan font-weight="bold" fill="#000">Channel File:</tspan><tspan fill="#141414"> Random_demo.chn</tspan></text>
<text x="434" y="376" font-size="7.7" fill="#111" font-family="'Liberation Sans', sans-serif" ><tspan font-weight="bold" fill="#000">Profile File:</tspan><tspan fill="#141414"> RANRCT.pro</tspan></text>
<text x="434" y="388.7" font-size="7.7" fill="#111" font-family="'Liberation Sans', sans-serif" ><tspan font-weight="bold" fill="#000">Schedule File:</tspan><tspan fill="#141414"> Random_demo_report.sch</tspan></text>
<text x="434" y="400.8" font-size="7.7" fill="#111" font-family="'Liberation Sans', sans-serif" textLength="165" lengthAdjust="spacingAndGlyphs" ><tspan font-weight="bold" fill="#000">Reference Import:</tspan><tspan fill="#141414"> victory_06Jun00_132556_1</tspan></text>
<text x="434" y="461.3" font-size="7.7" fill="#111" font-family="'Liberation Sans', sans-serif" ><tspan font-weight="bold" fill="#000">Initial Test Level:</tspan><tspan fill="#141414"> -6 dB</tspan></text>
<text x="434" y="474.1" font-size="7.7" fill="#111" font-family="'Liberation Sans', sans-serif" ><tspan font-weight="bold" fill="#000">Time at Initial Level:</tspan><tspan fill="#141414"> 12 Loops</tspan></text>
<text x="434" y="485.9" font-size="7.7" fill="#111" font-family="'Liberation Sans', sans-serif" ><tspan font-weight="bold" fill="#000">Elapsed Test Time:</tspan><tspan fill="#141414"> 00:00:02.000</tspan></text>
<text x="434" y="498.4" font-size="7.7" fill="#111" font-family="'Liberation Sans', sans-serif" ><tspan font-weight="bold" fill="#000">Remaining Test Time:</tspan><tspan fill="#141414"> 00:00:00.000</tspan></text>
<text x="434" y="559.1" font-size="7.7" fill="#111" font-family="'Liberation Sans', sans-serif" ><tspan font-weight="bold" fill="#000">Frame Data (.SDD)</tspan></text>
<text x="442" y="571.9" font-size="7.7" fill="#111" font-family="'Liberation Sans', sans-serif" ><tspan font-weight="bold" fill="#000">Save:</tspan><tspan fill="#141414"> Yes</tspan></text>
<text x="442" y="583.7" font-size="7.7" fill="#111" font-family="'Liberation Sans', sans-serif" ><tspan font-weight="bold" fill="#000">File Name:</tspan><tspan fill="#141414"> Default</tspan></text>
<text x="442" y="596.2" font-size="7.7" fill="#111" font-family="'Liberation Sans', sans-serif" ><tspan font-weight="bold" fill="#000">Folder:</tspan><tspan fill="#141414"> Use Default Folder</tspan></text>
<text x="442" y="608" font-size="7.7" fill="#111" font-family="'Liberation Sans', sans-serif" ><tspan font-weight="bold" fill="#000">When to Save</tspan></text>
<text x="450" y="621.1" font-size="7.7" fill="#111" font-family="'Liberation Sans', sans-serif" ><tspan font-weight="bold" fill="#000">Level Change:</tspan><tspan fill="#141414"> Yes</tspan></text>
<text x="450" y="632.9" font-size="7.7" fill="#111" font-family="'Liberation Sans', sans-serif" ><tspan font-weight="bold" fill="#000">Level End:</tspan><tspan fill="#141414"> Yes</tspan></text>
<text x="450" y="645.4" font-size="7.7" fill="#111" font-family="'Liberation Sans', sans-serif" ><tspan font-weight="bold" fill="#000">Alarm:</tspan><tspan fill="#141414"> No</tspan></text>
<text x="450" y="657.9" font-size="7.7" fill="#111" font-family="'Liberation Sans', sans-serif" ><tspan font-weight="bold" fill="#000">External:</tspan><tspan fill="#141414"> No</tspan></text>
<text x="450" y="670" font-size="7.7" fill="#111" font-family="'Liberation Sans', sans-serif" ><tspan font-weight="bold" fill="#000">Elapsed Time:</tspan><tspan fill="#141414"> 5 seconds</tspan></text>
<text x="434" y="682.5" font-size="7.7" fill="#111" font-family="'Liberation Sans', sans-serif" ><tspan font-weight="bold" fill="#000">Stream Data (.STX)</tspan></text>
<text x="442" y="695" font-size="7.7" fill="#111" font-family="'Liberation Sans', sans-serif" ><tspan font-weight="bold" fill="#000">Save:</tspan><tspan fill="#141414"> No</tspan></text>
<text x="434" y="756.8" font-size="7.7" fill="#111" font-family="'Liberation Sans', sans-serif" ><tspan font-weight="bold" fill="#000">Standard:</tspan><tspan fill="#141414"> Custom</tspan></text>
<text x="434" y="769.2" font-size="7.7" fill="#111" font-family="'Liberation Sans', sans-serif" ><tspan font-weight="bold" fill="#000">Bandwidth:</tspan><tspan fill="#141414"> 2000 Hz</tspan></text>
<text x="442" y="781.4" font-size="7.7" fill="#111" font-family="'Liberation Sans', sans-serif" ><tspan font-weight="bold" fill="#000">Auto:</tspan><tspan fill="#141414"> No</tspan></text>
<text x="442" y="793.2" font-size="7.7" fill="#111" font-family="'Liberation Sans', sans-serif" ><tspan font-weight="bold" fill="#000">Plot All:</tspan><tspan fill="#141414"> No</tspan></text>
<text x="434" y="805.7" font-size="7.7" fill="#111" font-family="'Liberation Sans', sans-serif" ><tspan font-weight="bold" fill="#000">Resolution:</tspan><tspan fill="#141414"> 800 Lines</tspan></text>
<text x="434" y="817.5" font-size="7.7" fill="#111" font-family="'Liberation Sans', sans-serif" ><tspan font-weight="bold" fill="#000">Delta Freq:</tspan><tspan fill="#141414"> 2.500000 Hz</tspan></text>
<rect x="519" y="294" width="1" height="7" fill="#000" />
<text x="433.7" y="425.2" font-size="11" fill="#30507f" font-family="'Liberation Sans', sans-serif" textLength="55.7" lengthAdjust="spacingAndGlyphs" >Test Results</text>
<rect x="434" y="441" width="450" height="1" fill="#a8a8a8" />
<text x="433.7" y="523" font-size="11" fill="#30507f" font-family="'Liberation Sans', sans-serif" textLength="60.8" lengthAdjust="spacingAndGlyphs" >Data Storage</text>
<rect x="434" y="539" width="450" height="1" fill="#a8a8a8" />
<text x="433.7" y="719.6" font-size="11" fill="#30507f" font-family="'Liberation Sans', sans-serif" textLength="53" lengthAdjust="spacingAndGlyphs" >Acquisition</text>
<rect x="434" y="736" width="450" height="1" fill="#a8a8a8" />
<text x="954" y="235.4" font-size="7.7" fill="#111" font-family="'Liberation Sans', sans-serif" ><tspan font-weight="bold" fill="#000">Overlap:</tspan><tspan fill="#141414"> None</tspan></text>
<text x="954" y="248.3" font-size="7.7" fill="#111" font-family="'Liberation Sans', sans-serif" ><tspan font-weight="bold" fill="#000">Averaging</tspan></text>
<text x="962" y="260.6" font-size="7.7" fill="#111" font-family="'Liberation Sans', sans-serif" ><tspan font-weight="bold" fill="#000">Control</tspan></text>
<text x="970" y="272.2" font-size="7.7" fill="#111" font-family="'Liberation Sans', sans-serif" ><tspan font-weight="bold" fill="#000">DOF:</tspan><tspan fill="#141414"> 120</tspan></text>
<text x="962" y="284.5" font-size="7.7" fill="#111" font-family="'Liberation Sans', sans-serif" ><tspan font-weight="bold" fill="#000">Monitor</tspan></text>
<text x="970" y="297.5" font-size="7.7" fill="#111" font-family="'Liberation Sans', sans-serif" ><tspan font-weight="bold" fill="#000">DOF:</tspan><tspan fill="#141414"> 120</tspan></text>
<text x="970" y="309.7" font-size="7.7" fill="#111" font-family="'Liberation Sans', sans-serif" ><tspan font-weight="bold" fill="#000">Type:</tspan><tspan fill="#141414"> Exponential</tspan></text>
<text x="954" y="370.4" font-size="7.7" fill="#111" font-family="'Liberation Sans', sans-serif" ><tspan font-weight="bold" fill="#000">Test Control Mode:</tspan><tspan fill="#141414"> Random</tspan></text>
<text x="954" y="383.4" font-size="7.7" fill="#111" font-family="'Liberation Sans', sans-serif" ><tspan font-weight="bold" fill="#000">Strategy:</tspan><tspan fill="#141414"> Average</tspan></text>
<text x="954" y="395.7" font-size="7.7" fill="#111" font-family="'Liberation Sans', sans-serif" ><tspan font-weight="bold" fill="#000">Mode:</tspan><tspan fill="#141414"> Automatic</tspan></text>
<text x="954" y="407.6" font-size="7.7" fill="#111" font-family="'Liberation Sans', sans-serif" ><tspan font-weight="bold" fill="#000">Update:</tspan><tspan fill="#141414"> Dynamic</tspan></text>
<text x="954" y="419.6" font-size="7.7" fill="#111" font-family="'Liberation Sans', sans-serif" ><tspan font-weight="bold" fill="#000">Loop Gain:</tspan><tspan fill="#141414"> Low</tspan></text>
<text x="954" y="432.5" font-size="7.7" fill="#111" font-family="'Liberation Sans', sans-serif" ><tspan font-weight="bold" fill="#000">Spectral Smoothing:</tspan><tspan fill="#141414"> Off</tspan></text>
<text x="954" y="444.8" font-size="7.7" fill="#111" font-family="'Liberation Sans', sans-serif" ><tspan font-weight="bold" fill="#000">Drive Range:</tspan><tspan fill="#141414"> Default</tspan></text>
<text x="954" y="456.8" font-size="7.7" fill="#111" font-family="'Liberation Sans', sans-serif" ><tspan font-weight="bold" fill="#000">Shaker Type:</tspan><tspan fill="#141414"> Electrodynamic</tspan></text>
<text x="954" y="469.4" font-size="7.7" fill="#111" font-family="'Liberation Sans', sans-serif" ><tspan font-weight="bold" fill="#000">Startup Shaping:</tspan><tspan fill="#141414"> Low</tspan></text>
<text x="954" y="495.3" font-size="7.7" fill="#111" font-family="'Liberation Sans', sans-serif" ><tspan font-weight="bold" fill="#000">Control Exclusion Zones</tspan></text>
<text x="962" y="507.9" font-size="7.7" fill="#111" font-family="'Liberation Sans', sans-serif" ><tspan font-weight="bold" fill="#000">Profile Range:</tspan><tspan fill="#141414"> Min Freq 10.00 - Max Freq 1900.00</tspan></text>
<text x="954" y="620.9" font-size="7.7" fill="#111" font-family="'Liberation Sans', sans-serif" ><tspan font-weight="bold" fill="#000">Enabled:</tspan><tspan fill="#141414"> No</tspan></text>
<text x="954" y="633.9" font-size="7.7" fill="#111" font-family="'Liberation Sans', sans-serif" ><tspan font-weight="bold" fill="#000">Print:</tspan><tspan fill="#141414"> Last Frame</tspan></text>
<text x="954" y="645.4" font-size="7.7" fill="#111" font-family="'Liberation Sans', sans-serif" ><tspan font-weight="bold" fill="#000">SGT Files</tspan></text>
<text x="954" y="707.3" font-size="7.7" fill="#111" font-family="'Liberation Sans', sans-serif" ><tspan font-weight="bold" fill="#000">UFF:</tspan><tspan fill="#141414"> victory_06Jun00_132556_1</tspan></text>
<text x="954" y="720.2" font-size="7.7" fill="#111" font-family="'Liberation Sans', sans-serif" ><tspan font-weight="bold" fill="#000">UFF Description:</tspan><tspan fill="#141414"> 1 x Chan 1</tspan></text>
<text x="954" y="732" font-size="7.7" fill="#111" font-family="'Liberation Sans', sans-serif" ><tspan font-weight="bold" fill="#000">Profile Range</tspan></text>
<text x="963" y="743.7" font-size="7.7" fill="#111" font-family="'Liberation Sans', sans-serif" ><tspan font-weight="bold" fill="#000">Min Freq:</tspan><tspan fill="#141414"> 20.00</tspan></text>
<text x="963" y="755.8" font-size="7.7" fill="#111" font-family="'Liberation Sans', sans-serif" ><tspan font-weight="bold" fill="#000">Max Freq:</tspan><tspan fill="#141414"> 1000.00</tspan></text>
<text x="954" y="769.1" font-size="7.7" fill="#111" font-family="'Liberation Sans', sans-serif" ><tspan font-weight="bold" fill="#000">Alarm / Abort Range</tspan></text>
<text x="963" y="780.9" font-size="7.7" fill="#111" font-family="'Liberation Sans', sans-serif" ><tspan font-weight="bold" fill="#000">Min Freq:</tspan><tspan fill="#141414"> 20.00</tspan></text>
<text x="963" y="793" font-size="7.7" fill="#111" font-family="'Liberation Sans', sans-serif" ><tspan font-weight="bold" fill="#000">Max Freq:</tspan><tspan fill="#141414"> 1000.00</tspan></text>
<text x="954" y="805.9" font-size="7.7" fill="#111" font-family="'Liberation Sans', sans-serif" ><tspan font-weight="bold" fill="#000">Abort Line Settings</tspan></text>
<text x="963" y="818" font-size="7.7" fill="#111" font-family="'Liberation Sans', sans-serif" ><tspan font-weight="bold" fill="#000">+Abort:</tspan><tspan fill="#141414"> 6</tspan></text>
<text x="954" y="333.6" font-size="11" fill="#30507f" font-family="'Liberation Sans', sans-serif" textLength="65" lengthAdjust="spacingAndGlyphs" >Control Setup</text>
<rect x="954" y="350" width="450" height="1" fill="#a8a8a8" />
<text x="954" y="583" font-size="11" fill="#30507f" font-family="'Liberation Sans', sans-serif" textLength="81.8" lengthAdjust="spacingAndGlyphs" >Print Automation</text>
<rect x="954" y="600" width="450" height="1" fill="#a8a8a8" />
<text x="954" y="670" font-size="11" fill="#30507f" font-family="'Liberation Sans', sans-serif" textLength="82.5" lengthAdjust="spacingAndGlyphs" >Reference Import</text>
<rect x="954" y="686" width="450" height="1" fill="#a8a8a8" />
<g stroke="#808080" stroke-width="1" stroke-dasharray="2,1" fill="none"><path d="M952.5,521 V542"/><path d="M978.5,521 V542"/><path d="M1035.5,521 V542"/><path d="M1108.5,521 V542"/><path d="M1180.5,521 V542"/><path d="M1246.5,521 V542"/><path d="M952,521.5 H1246"/></g>
<path d="M952.5,542.5 H1245.5 V563.5 H952.5 Z" fill="none" stroke="#000" stroke-width="1.3"/>
<rect x="978" y="542" width="1" height="22" fill="#000" />
<rect x="1035" y="542" width="1" height="22" fill="#000" />
<rect x="1108" y="542" width="1" height="22" fill="#000" />
<rect x="1180" y="542" width="1" height="22" fill="#000" />
<text x="1007.0" y="529.6" font-size="7.7" fill="#111" font-family="'Liberation Sans', sans-serif" font-weight="bold" text-anchor="middle" >Type</text>
<text x="1072.0" y="529.6" font-size="7.7" fill="#111" font-family="'Liberation Sans', sans-serif" font-weight="bold" text-anchor="middle" >Min Freq</text>
<text x="1144.5" y="529.6" font-size="7.7" fill="#111" font-family="'Liberation Sans', sans-serif" font-weight="bold" text-anchor="middle" >Max Freq</text>
<text x="1213.5" y="529.6" font-size="7.7" fill="#111" font-family="'Liberation Sans', sans-serif" font-weight="bold" text-anchor="middle" >Abort Lines</text>
<text x="965.5" y="551.8" font-size="7.7" fill="#2a2a2a" font-family="'Liberation Sans', sans-serif" text-anchor="middle" >01</text>
<text x="1007.0" y="551.8" font-size="7.7" fill="#2a2a2a" font-family="'Liberation Sans', sans-serif" text-anchor="middle" >RMS Level</text>
<text x="1072.0" y="551.8" font-size="7.7" fill="#2a2a2a" font-family="'Liberation Sans', sans-serif" text-anchor="middle" >20.00</text>
<text x="1144.5" y="551.8" font-size="7.7" fill="#2a2a2a" font-family="'Liberation Sans', sans-serif" text-anchor="middle" >30.00</text>
<text x="1213.5" y="551.8" font-size="7.7" fill="#2a2a2a" font-family="'Liberation Sans', sans-serif" text-anchor="middle" >On</text>
<rect x="398" y="871" width="1076" height="16" fill="#f0f0f0" />
<rect x="383.5" y="872.5" width="14" height="14" fill="#fff" stroke="#8a8a8a" stroke-width="1"/>
<path d="M388,879.5 L392.3,876 V883 Z" fill="#222"/>
<rect x="710.5" y="872.5" width="123" height="14" fill="#fff" stroke="#9a9a9a" stroke-width="1"/>
<rect x="1457.5" y="872.5" width="14" height="14" fill="#fff" stroke="#8a8a8a" stroke-width="1"/>
<path d="M1466.5,879.5 L1462.2,876 V883 Z" fill="#222"/>
<text x="19.4" y="902.5" font-size="12" fill="#3c3c3c" font-family="'Liberation Sans', sans-serif" textLength="62" lengthAdjust="spacingAndGlyphs" >Page 6 of 17</text>
<text x="101.2" y="902.5" font-size="12" fill="#3c3c3c" font-family="'Liberation Sans', sans-serif" textLength="58" lengthAdjust="spacingAndGlyphs" >1087 words</text>
<path d="M185.5,903 V893 L182.5,892.5 H179.5 V902.5 H185.5 M185.5,893 L188.5,892.5 H191.5 V894.5 M185.5,902.5 H191.5" fill="none" stroke="#555" stroke-width="1"/>
<path d="M184,903 L185.5,905 L187,903" fill="none" stroke="#555" stroke-width="1"/>
<path d="M188.4,895.5 L192.6,900.5 M192.6,895.5 L188.4,900.5" stroke="#555" stroke-width="1.4"/>
<path d="M215.5,899 V904.5 H226.5 V893.5 H220.5" fill="none" stroke="#555" stroke-width="1.1"/>
<rect x="221" y="893" width="6" height="3" fill="#555" />
<circle cx="216.9" cy="895.2" r="2.9" fill="#555"/>
<rect x="217.5" y="898" width="2" height="1" fill="#555" />
<rect x="220.5" y="898" width="2" height="1" fill="#555" />
<rect x="223.5" y="898" width="2" height="1" fill="#555" />
<rect x="217.5" y="900" width="2" height="1" fill="#555" />
<rect x="220.5" y="900" width="2" height="1" fill="#555" />
<rect x="223.5" y="900" width="2" height="1" fill="#555" />
<rect x="217.5" y="902" width="2" height="1" fill="#555" />
<rect x="220.5" y="902" width="2" height="1" fill="#555" />
<rect x="223.5" y="902" width="2" height="1" fill="#555" />
<path d="M249.8,893.5 A5.3,5.3 0 0 0 250.8,904.3" fill="none" stroke="#444" stroke-width="1.3" stroke-dasharray="2.6,1.6"/>
<path d="M251.5,892 V898" stroke="#444" stroke-width="1.1"/>
<path d="M249.5,896.5 L251.5,899 L253.5,896.5 Z M256,895.5 L258.3,897.3 L256,899 Z" fill="#444"/>
<rect x="253" y="897" width="3" height="1" fill="#444" />
<path d="M252.8,900.3 L260.3,906.3 M259.5,900.3 L253.5,906.3" stroke="#444" stroke-width="1.7"/>
<text x="265" y="902.5" font-size="12" fill="#3c3c3c" font-family="'Liberation Sans', sans-serif" font-weight="bold" textLength="125" lengthAdjust="spacingAndGlyphs" >Accessibility: Investigate</text>
<rect x="1203" y="889" width="40" height="21" fill="#c6c6c6" />
<path d="M1176.5,893.5 H1182.5 V904 H1176.5 Z M1182.5,893.5 H1188.5 V904 H1182.5 Z" fill="#f5f5f5" stroke="#666" stroke-width="1"/>
<rect x="1178" y="896" width="3" height="1" fill="#777" />
<rect x="1184" y="896" width="3" height="1" fill="#777" />
<rect x="1178" y="898" width="3" height="1" fill="#777" />
<rect x="1184" y="898" width="3" height="1" fill="#777" />
<rect x="1178" y="900" width="3" height="1" fill="#777" />
<rect x="1184" y="900" width="3" height="1" fill="#777" />
<rect x="1178" y="902" width="3" height="1" fill="#777" />
<rect x="1184" y="902" width="3" height="1" fill="#777" />
<rect x="1182" y="904" width="1" height="2" fill="#666" />
<path d="M1216.5,893.5 H1229.5 V905.5 H1216.5 Z" fill="#e8e8e8" stroke="#666" stroke-width="1"/>
<rect x="1218" y="896" width="10" height="1" fill="#666" />
<rect x="1218" y="898" width="10" height="1" fill="#666" />
<rect x="1218" y="900" width="10" height="1" fill="#666" />
<rect x="1218" y="902" width="10" height="1" fill="#666" />
<path d="M1256.5,893.5 H1267.5 V905.5 H1256.5 Z" fill="#f5f5f5" stroke="#666" stroke-width="1"/>
<rect x="1258" y="896" width="7" height="1" fill="#777" />
<rect x="1258" y="898" width="7" height="1" fill="#777" />
<rect x="1258" y="900" width="7" height="1" fill="#777" />
<circle cx="1266.5" cy="903" r="3.6" fill="#666"/>
<path d="M1264.5,901.5 L1266.5,903 L1268.3,902 M1265.5,905.5 L1267,904" stroke="#fff" stroke-width="0.8" fill="none"/>
<rect x="1289" y="898" width="8" height="1" fill="#9a9a9a" />
<rect x="1302" y="898" width="100" height="1" fill="#444" />
<rect x="1352" y="895" width="1" height="7" fill="#333" />
<rect x="1406" y="898" width="9" height="1" fill="#9a9a9a" />
<rect x="1410" y="894" width="1" height="9" fill="#9a9a9a" />
<text x="1427.8" y="902.5" font-size="12" fill="#3c3c3c" font-family="'Liberation Sans', sans-serif" textLength="21.5" lengthAdjust="spacingAndGlyphs" >62%</text>
</svg></body></html>
